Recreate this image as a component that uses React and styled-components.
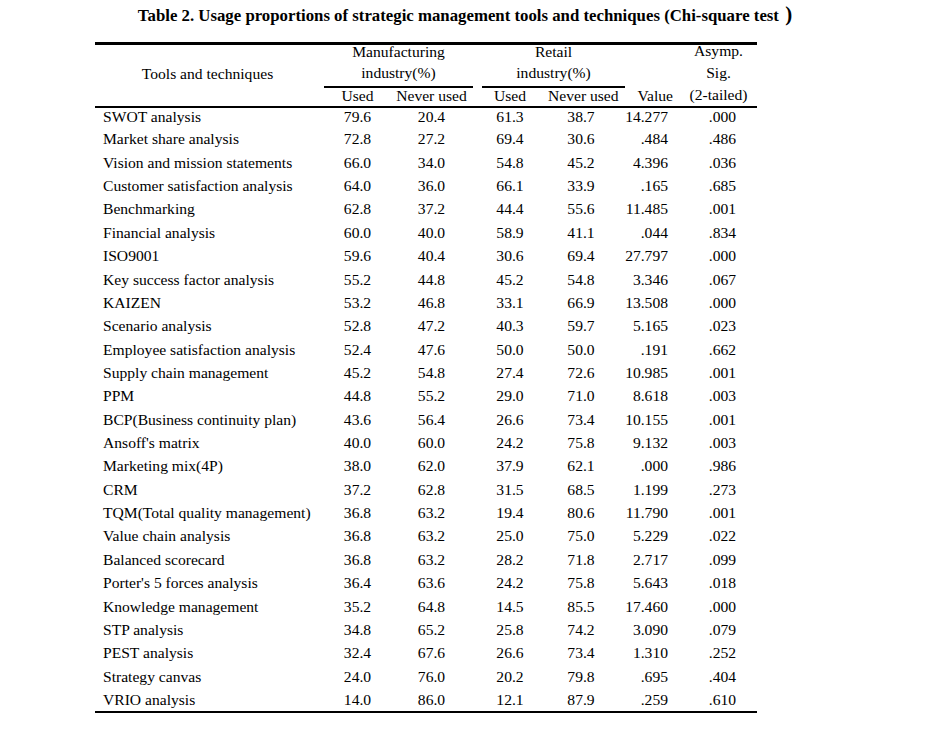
import React from 'react'
import { styled, createGlobalStyle } from 'styled-components'

const rows = [
  ['SWOT analysis', '79.6', '20.4', '61.3', '38.7', '14.277', '.000'],
  ['Market share analysis', '72.8', '27.2', '69.4', '30.6', '.484', '.486'],
  ['Vision and mission statements', '66.0', '34.0', '54.8', '45.2', '4.396', '.036'],
  ['Customer satisfaction analysis', '64.0', '36.0', '66.1', '33.9', '.165', '.685'],
  ['Benchmarking', '62.8', '37.2', '44.4', '55.6', '11.485', '.001'],
  ['Financial analysis', '60.0', '40.0', '58.9', '41.1', '.044', '.834'],
  ['ISO9001', '59.6', '40.4', '30.6', '69.4', '27.797', '.000'],
  ['Key success factor analysis', '55.2', '44.8', '45.2', '54.8', '3.346', '.067'],
  ['KAIZEN', '53.2', '46.8', '33.1', '66.9', '13.508', '.000'],
  ['Scenario analysis', '52.8', '47.2', '40.3', '59.7', '5.165', '.023'],
  ['Employee satisfaction analysis', '52.4', '47.6', '50.0', '50.0', '.191', '.662'],
  ['Supply chain management', '45.2', '54.8', '27.4', '72.6', '10.985', '.001'],
  ['PPM', '44.8', '55.2', '29.0', '71.0', '8.618', '.003'],
  ['BCP(Business continuity plan)', '43.6', '56.4', '26.6', '73.4', '10.155', '.001'],
  ["Ansoff's matrix", '40.0', '60.0', '24.2', '75.8', '9.132', '.003'],
  ['Marketing mix(4P)', '38.0', '62.0', '37.9', '62.1', '.000', '.986'],
  ['CRM', '37.2', '62.8', '31.5', '68.5', '1.199', '.273'],
  ['TQM(Total quality management)', '36.8', '63.2', '19.4', '80.6', '11.790', '.001'],
  ['Value chain analysis', '36.8', '63.2', '25.0', '75.0', '5.229', '.022'],
  ['Balanced scorecard', '36.8', '63.2', '28.2', '71.8', '2.717', '.099'],
  ["Porter's 5 forces analysis", '36.4', '63.6', '24.2', '75.8', '5.643', '.018'],
  ['Knowledge management', '35.2', '64.8', '14.5', '85.5', '17.460', '.000'],
  ['STP analysis', '34.8', '65.2', '25.8', '74.2', '3.090', '.079'],
  ['PEST analysis', '32.4', '67.6', '26.6', '73.4', '1.310', '.252'],
  ['Strategy canvas', '24.0', '76.0', '20.2', '79.8', '.695', '.404'],
  ['VRIO analysis', '14.0', '86.0', '12.1', '87.9', '.259', '.610'],
]

function App() {
  return (
    <Page>
      <GlobalStyle />
      <Title>
        Table 2. Usage proportions of strategic management tools and techniques (Chi-square test <Paren>)</Paren>
      </Title>
      <Frame>
        <Table>
          <colgroup>
            <col style={{ width: 225 }} />
            <col style={{ width: 75 }} />
            <col style={{ width: 73 }} />
            <col style={{ width: 84 }} />
            <col style={{ width: 58 }} />
            <col style={{ width: 70 }} />
            <col style={{ width: 77 }} />
          </colgroup>
          <thead>
            <tr>
              <NameHead rowSpan={2}>Tools and techniques</NameHead>
              <GroupHead colSpan={2}>
                <GroupLabel $left={4} $right={-5}>Manufacturing<br />industry(%)</GroupLabel>
              </GroupHead>
              <GroupHead colSpan={2}>
                <GroupLabel $left={14} $right={-15}>Retail<br />industry(%)</GroupLabel>
              </GroupHead>
              <ValueHead rowSpan={2}>Value</ValueHead>
              <SigHead rowSpan={2}>
                <SigLabel>Asymp.<br />Sig.<br />(2-tailed)</SigLabel>
              </SigHead>
            </tr>
            <tr>
              <SubHead>Used</SubHead>
              <SubHead>Never used</SubHead>
              <SubHead>Used</SubHead>
              <SubHead $shift={-4}>Never used</SubHead>
            </tr>
          </thead>
          <tbody>
            {rows.map((r) => (
              <Row key={r[0]}>
                <Name>{r[0]}</Name>
                <Num>{r[1]}</Num>
                <Num>{r[2]}</Num>
                <Num>{r[3]}</Num>
                <Num>{r[4]}</Num>
                <Val>{r[5]}</Val>
                <Sig>{r[6]}</Sig>
              </Row>
            ))}
          </tbody>
        </Table>
      </Frame>
    </Page>
  )
}

export default App

//styling:
const GlobalStyle = createGlobalStyle`
  body {
    margin: 0;
    background: #ffffff;
    font-family: 'Liberation Serif', 'Times New Roman', serif;
    color: #000000;
  }
`

const Page = styled.div`
  width: 937px;
  height: 747px;
  padding-top: 3px;
  box-sizing: border-box;
`

const Title = styled.div`
  text-align: center;
  font-weight: 700;
  font-size: 16.8px;
  line-height: 22px;
  padding-right: 7px;
  white-space: nowrap;
`

const Paren = styled.span`
  font-size: 21px;
  margin-left: 2px;
`

const Frame = styled.div`
  margin: 15px 0 0 95px;
  width: 662px;
  border-top: 3px solid #000;
  border-bottom: 2px solid #000;
`

const Table = styled.table`
  width: 662px;
  border-collapse: collapse;
  table-layout: fixed;
  font-size: 15.6px;

  th {
    font-weight: 400;
    white-space: nowrap;
    padding: 0;
  }
`

const NameHead = styled.th`
  text-align: center;
  vertical-align: middle;
  padding-bottom: 4px !important;
  border-bottom: 2px solid #000;
`

const GroupHead = styled.th`
  height: 41px;
  vertical-align: top;
`

const GroupLabel = styled.div`
  line-height: 21px;
  margin: -4px ${(p) => p.$right}px 0 ${(p) => p.$left}px;
  padding-bottom: 3px;
  border-bottom: 2px solid #000;
  text-align: center;
`

const SubHead = styled.th`
  height: 18px;
  line-height: 16px;
  vertical-align: top;
  text-align: center;
  border-bottom: 2px solid #000;
  text-indent: ${(p) => p.$shift || 0}px;
`

const ValueHead = styled.th`
  vertical-align: bottom;
  text-align: right;
  padding-right: 7px !important;
  padding-bottom: 2px !important;
  line-height: 16px;
  border-bottom: 2px solid #000;
`

const SigHead = styled.th`
  vertical-align: top;
  text-align: center;
  border-bottom: 2px solid #000;
`

const SigLabel = styled.div`
  line-height: 22px;
  margin-top: -5px;
  height: 56px;
`

const Row = styled.tr`
  height: 23.36px;

  &:last-child {
    height: 20.5px;
  }
`

const Cell = styled.td`
  padding: 0;
  line-height: 18px;
  vertical-align: top;
  white-space: nowrap;
`

const Name = styled(Cell)`
  padding-left: 8px;
`

const Num = styled(Cell)`
  text-align: center;
`

const Val = styled(Cell)`
  text-align: right;
  padding-right: 12px;
`

const Sig = styled(Cell)`
  text-align: center;
  padding-left: 8px;
`
